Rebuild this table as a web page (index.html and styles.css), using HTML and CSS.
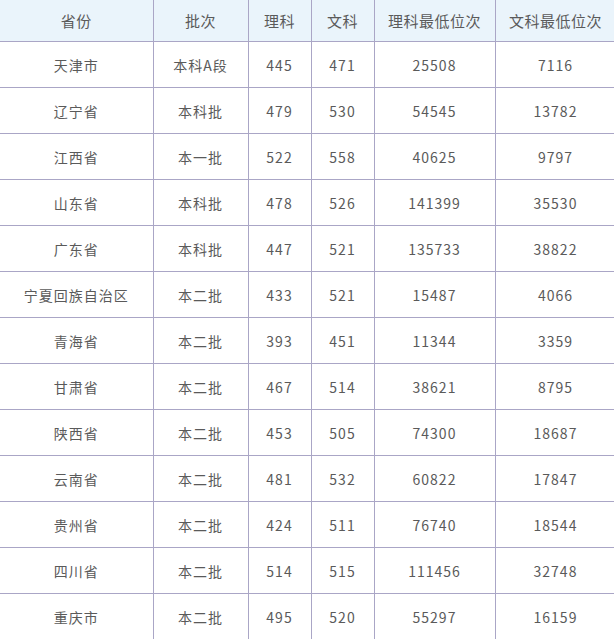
FILE: index.html
```html
<!DOCTYPE html>
<html lang="zh">
<head>
<meta charset="utf-8">
<title>录取分数</title>
<link rel="stylesheet" href="styles.css">
</head>
<body>
<table class="score-table">
  <colgroup>
    <col class="c1"><col class="c2"><col class="c3"><col class="c4"><col class="c5"><col class="c6">
  </colgroup>
  <thead>
    <tr><th>省份</th><th>批次</th><th>理科</th><th>文科</th><th>理科最低位次</th><th>文科最低位次</th></tr>
  </thead>
  <tbody>
    <tr><td>天津市</td><td>本科A段</td><td>445</td><td>471</td><td>25508</td><td>7116</td></tr>
    <tr><td>辽宁省</td><td>本科批</td><td>479</td><td>530</td><td>54545</td><td>13782</td></tr>
    <tr><td>江西省</td><td>本一批</td><td>522</td><td>558</td><td>40625</td><td>9797</td></tr>
    <tr><td>山东省</td><td>本科批</td><td>478</td><td>526</td><td>141399</td><td>35530</td></tr>
    <tr><td>广东省</td><td>本科批</td><td>447</td><td>521</td><td>135733</td><td>38822</td></tr>
    <tr><td>宁夏回族自治区</td><td>本二批</td><td>433</td><td>521</td><td>15487</td><td>4066</td></tr>
    <tr><td>青海省</td><td>本二批</td><td>393</td><td>451</td><td>11344</td><td>3359</td></tr>
    <tr><td>甘肃省</td><td>本二批</td><td>467</td><td>514</td><td>38621</td><td>8795</td></tr>
    <tr><td>陕西省</td><td>本二批</td><td>453</td><td>505</td><td>74300</td><td>18687</td></tr>
    <tr><td>云南省</td><td>本二批</td><td>481</td><td>532</td><td>60822</td><td>17847</td></tr>
    <tr><td>贵州省</td><td>本二批</td><td>424</td><td>511</td><td>76740</td><td>18544</td></tr>
    <tr><td>四川省</td><td>本二批</td><td>514</td><td>515</td><td>111456</td><td>32748</td></tr>
    <tr><td>重庆市</td><td>本二批</td><td>495</td><td>520</td><td>55297</td><td>16159</td></tr>
  </tbody>
</table>
</body>
</html>
```
FILE: styles.css
```css
html, body {
  margin: 0;
  padding: 0;
  background: #ffffff;
}
body {
  font-family: "Noto Sans CJK SC", "Noto Sans", sans-serif;
  color: #5a5a5a;
  overflow: hidden;
}
.score-table {
  border-collapse: collapse;
  table-layout: fixed;
  width: 616px;
}
.c1 { width: 153px; }
.c2 { width: 95px; }
.c3 { width: 63px; }
.c4 { width: 63px; }
.c5 { width: 121px; }
.c6 { width: 121px; }
.score-table th,
.score-table td {
  border: 1px solid #aaa6c6;
  text-align: center;
  padding: 0;
  white-space: nowrap;
}
.score-table tr > :first-child {
  border-left: none;
}
.score-table thead th {
  border-top: none;
  background: #eaf4fb;
  height: 41px;
  font-size: 15px;
  font-weight: normal;
  letter-spacing: 0.5px;
}
.score-table td {
  height: 45px;
  font-size: 14px;
  letter-spacing: 1px;
}
```
